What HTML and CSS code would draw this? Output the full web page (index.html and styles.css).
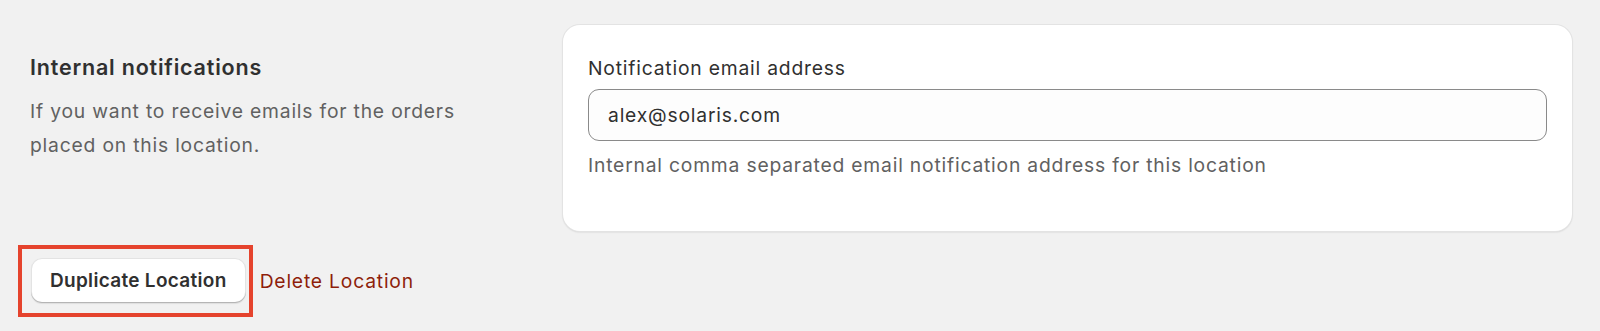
FILE: index.html
```html
<!DOCTYPE html>
<html>
<head>
	<meta charset='utf-8'/>
	<title>Location</title>
	<link rel="stylesheet" href="styles.css">
</head>
<body>
	<div class="section">
		<div class="aside">
			<h2 class="aside_title">Internal notifications</h2>
			<p class="aside_text">If you want to receive emails for the orders placed on this location.</p>
		</div>
		<div class="card">
			<label class="field_label" for="notify">Notification email address</label>
			<input class="field_input" id="notify" type="text" value="alex@solaris.com">
			<p class="field_help">Internal comma separated email notification address for this location</p>
		</div>
	</div>
	<div class="actions">
		<div class="highlight">
			<button class="btn" type="button">Duplicate Location</button>
		</div>
		<a class="link_danger" href="javascript:;">Delete Location</a>
	</div>
</body>
</html>
```

FILE: styles.css
```css
*{
	margin: 0;
	padding: 0;
	box-sizing: border-box;
}
html,body{
	background: #f1f1f1;
}
body{
	font-family: Inter, "Noto Sans", "Liberation Sans", sans-serif;
	font-size: 19.3px;
	letter-spacing: .8px;
	color: #303030;
}
a{
	text-decoration: none;
}
.section{
	display: flex;
	padding: 25px 28px 0 30px;
}
.aside{
	width: 533px;
	flex-shrink: 0;
}
.aside_title{
	margin-top: 28px;
	font-size: 21.5px;
	line-height: 28px;
	letter-spacing: .8px;
	font-weight: 600;
	color: #303030;
}
.aside_text{
	margin-top: 13px;
	max-width: 450px;
	line-height: 34px;
	color: #616161;
}
.card{
	flex: 1;
	background: #fff;
	border-radius: 17px;
	padding: 30px 25px 53px 25px;
	box-shadow: 0 0 0 1px #e3e3e3, 0 1px 2px rgba(0,0,0,.18);
}
.field_label{
	display: block;
	line-height: 26px;
	color: #303030;
}
.field_input{
	display: block;
	width: 100%;
	height: 52px;
	margin-top: 8px;
	padding: 0 19px;
	border: 1px solid #8a8a8a;
	border-radius: 11px;
	background: #fdfdfd;
	font-family: inherit;
	font-size: inherit;
	letter-spacing: inherit;
	color: #303030;
	outline: none;
}
.field_help{
	margin-top: 11px;
	line-height: 26px;
	color: #616161;
}
.actions{
	display: flex;
	align-items: center;
	padding: 14px 0 0 18px;
}
.highlight{
	border: 4px solid #e5432d;
	padding: 9px 3px 10px 9px;
}
.btn{
	display: block;
	height: 45px;
	padding: 0 19px;
	border: none;
	border-radius: 11px;
	background: #fff;
	font-family: inherit;
	font-size: 19px;
	letter-spacing: .3px;
	font-weight: 600;
	color: #303030;
	cursor: pointer;
	box-shadow: inset 0 -1px 0 #b5b5b5, inset 0 0 0 1px #e3e3e3, 0 1px 1px rgba(0,0,0,.08);
}
.link_danger{
	margin-left: 7px;
	color: #8e1f0b;
}
```
